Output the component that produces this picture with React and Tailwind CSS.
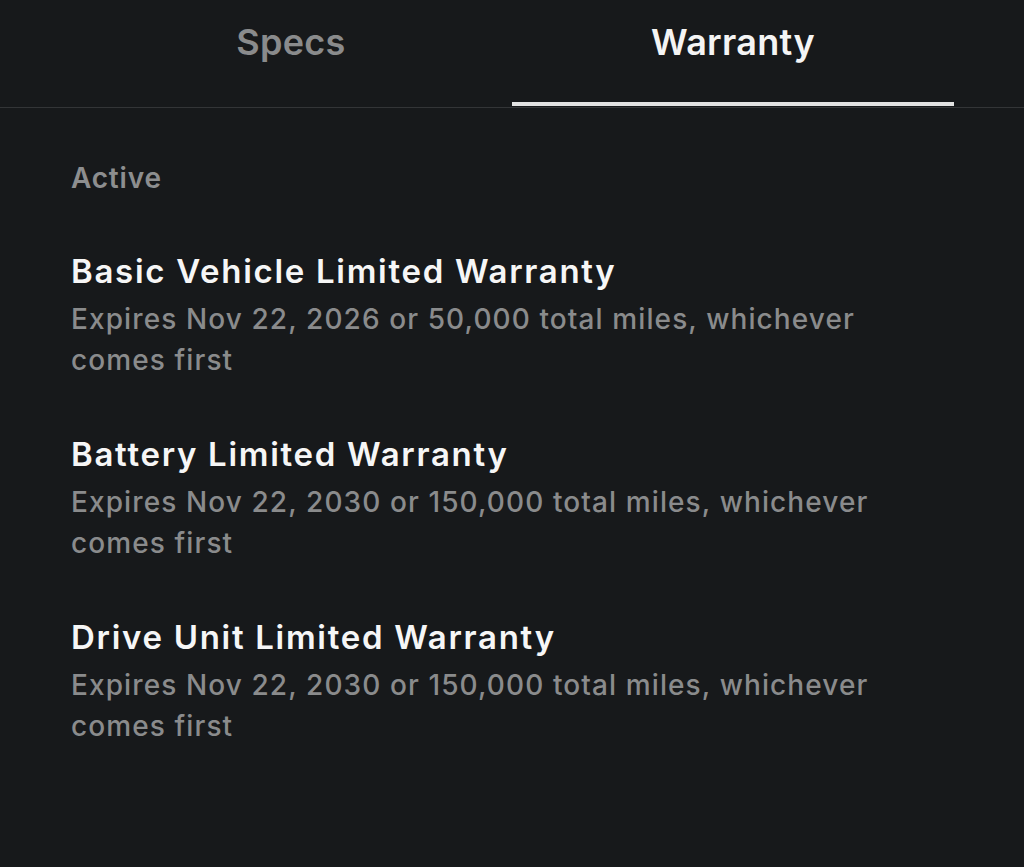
import React from "react";

const items = [
  { title: "Basic Vehicle Limited Warranty", desc: "Expires Nov 22, 2026 or 50,000 total miles, whichever comes first" },
  { title: "Battery Limited Warranty", desc: "Expires Nov 22, 2030 or 150,000 total miles, whichever comes first" },
  { title: "Drive Unit Limited Warranty", desc: "Expires Nov 22, 2030 or 150,000 total miles, whichever comes first" },
];

export default function App() {
  return (
    <div className="w-[1024px] h-[867px] bg-[#17191b] overflow-hidden" style={{ fontFamily: "Inter, 'Noto Sans', sans-serif" }}>
      <div className="flex px-[70px] border-b border-[#333537] h-[108px]">
        <div className="flex-1 flex flex-col items-center">
          <div className="pt-[20px] h-[64px] box-content text-[36px] leading-[44px] font-semibold text-[#8a8b8c] tracking-[0.3px]">Specs</div>
        </div>
        <div className="flex-1 flex flex-col items-center">
          <div className="pt-[20px] h-[44px] text-[36px] leading-[44px] font-semibold text-[#f4f4f4] tracking-[0.3px]">Warranty</div>
          <div className="flex-1" />
          <div className="w-full h-[4px] bg-[#e2e2e2] mb-[1px]" />
        </div>
      </div>
      <div className="pl-[71px] pr-[70px] pt-[52px]">
        <div className="text-[28px] leading-[36px] font-semibold text-[#8d8e8f] tracking-[0.8px]">Active</div>
        <div className="flex flex-col gap-[51px] mt-[53px]">
          {items.map((it) => (
            <div key={it.title} className="flex flex-col gap-[6px]">
              <div className="text-[33px] leading-[44px] font-semibold text-[#f6f6f6] tracking-[1.7px]">{it.title}</div>
              <div className="text-[28px] leading-[41px] font-medium text-[#8a8b8c] tracking-[1.1px]">{it.desc}</div>
            </div>
          ))}
        </div>
      </div>
    </div>
  );
}
